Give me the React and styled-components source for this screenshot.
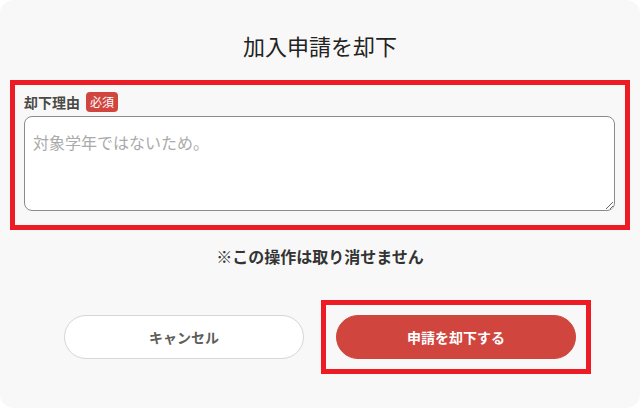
import React from "react";
import styled, { createGlobalStyle } from "styled-components";

const Global = createGlobalStyle`
  html, body { margin: 0; padding: 0; background: #ffffff; }
  body { font-family: "Noto Sans CJK JP", "Noto Sans", sans-serif; }
  * { box-sizing: border-box; }
`;

const Modal = styled.div`
  width: 640px;
  height: 408px;
  background: #f8f8f8;
  border-radius: 14px;
  padding: 29px 10px 0;
  display: flex;
  flex-direction: column;
  align-items: stretch;
`;

const Title = styled.h2`
  margin: 0 0 19px;
  font-size: 22px;
  line-height: 32px;
  font-weight: 400;
  color: #222;
  text-align: center;
`;

const Highlight = styled.div`
  border: 5px solid #ed1c24;
  padding: 7px 10px 14px 9px;
  display: flex;
  flex-direction: column;
  gap: 4px;
`;

const LabelRow = styled.div`
  display: flex;
  align-items: center;
  gap: 6px;
  height: 20px;
`;

const Label = styled.span`
  font-size: 14px;
  font-weight: 700;
  color: #4a4a46;
`;

const Badge = styled.span`
  background: #d0463f;
  color: #fff;
  font-size: 12px;
  line-height: 20px;
  height: 20px;
  padding: 0 4px;
  border-radius: 4px;
`;

const TextArea = styled.textarea`
  display: block;
  width: 100%;
  height: 95px;
  border: 1px solid #8c8c84;
  border-radius: 8px;
  background: #fff;
  padding: 13px 8px;
  font-family: "Noto Sans CJK JP", "Noto Sans", sans-serif;
  font-size: 16px;
  line-height: 24px;
  color: #333;
  outline: none;
  &::placeholder { color: #aaa; }
`;

const Note = styled.p`
  margin: 14px 0 0;
  font-size: 16px;
  line-height: 24px;
  font-weight: 700;
  color: #333;
  text-align: center;
`;

const ButtonRow = styled.div`
  margin-top: 47px;
  display: flex;
  justify-content: center;
  gap: 32px;
`;

const Marked = styled.div`
  display: flex;
  outline: 5px solid #ed1c24;
  outline-offset: 10px;
`;

const Button = styled.button`
  width: 240px;
  height: 44px;
  border-radius: 22px;
  font-family: "Noto Sans CJK JP", "Noto Sans", sans-serif;
  font-size: 14px;
  font-weight: 700;
  cursor: pointer;
  border: 1px solid ${(p) => (p.$primary ? "#d0463f" : "#d6d6d6")};
  background: ${(p) => (p.$primary ? "#d0463f" : "#fff")};
  color: ${(p) => (p.$primary ? "#fff" : "#5e5e58")};
`;

export default function App() {
  return (
    <>
      <Global />
      <Modal>
        <Title>加入申請を却下</Title>
        <Highlight>
          <LabelRow>
            <Label>却下理由</Label>
            <Badge>必須</Badge>
          </LabelRow>
          <TextArea placeholder="対象学年ではないため。" />
        </Highlight>
        <Note>※この操作は取り消せません</Note>
        <ButtonRow>
          <Button>キャンセル</Button>
          <Marked>
            <Button $primary>申請を却下する</Button>
          </Marked>
        </ButtonRow>
      </Modal>
    </>
  );
}
